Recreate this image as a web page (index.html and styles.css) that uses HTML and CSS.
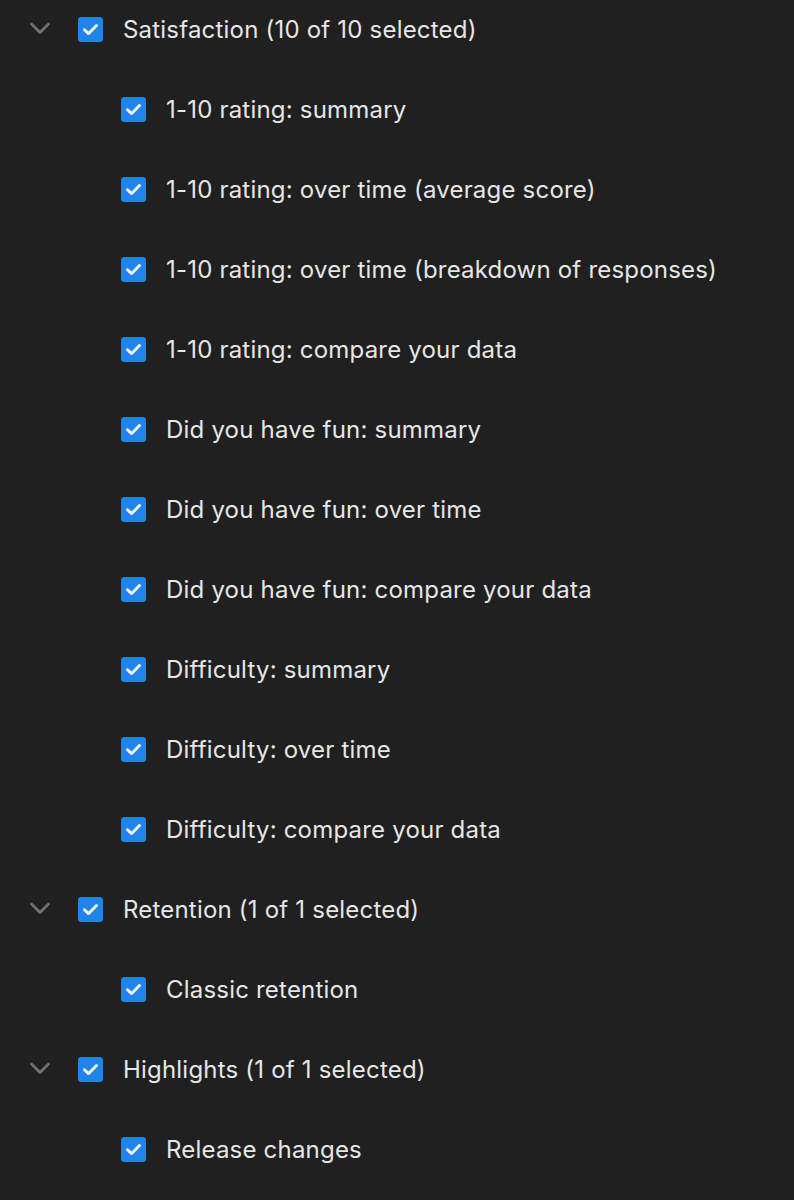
FILE: index.html
```html
<!DOCTYPE html>
<html>
<head>
<meta charset="utf-8">
<link rel="stylesheet" href="styles.css">
</head>
<body>
<div class="tree">
  <div class="row group">
    <svg class="chev" viewBox="0 0 20 20"><path d="M1.5 5 L10 13.5 L18.5 5" /></svg>
    <span class="cb"><svg viewBox="0 0 25 25"><path d="M6.5 12.8 L10.6 16.6 L18.5 8.6" /></svg></span>
    <span class="label">Satisfaction (10 of 10 selected)</span>
  </div>
  <div class="row item"><span class="cb"><svg viewBox="0 0 25 25"><path d="M6.5 12.8 L10.6 16.6 L18.5 8.6" /></svg></span><span class="label">1-10 rating: summary</span></div>
  <div class="row item"><span class="cb"><svg viewBox="0 0 25 25"><path d="M6.5 12.8 L10.6 16.6 L18.5 8.6" /></svg></span><span class="label">1-10 rating: over time (average score)</span></div>
  <div class="row item"><span class="cb"><svg viewBox="0 0 25 25"><path d="M6.5 12.8 L10.6 16.6 L18.5 8.6" /></svg></span><span class="label">1-10 rating: over time (breakdown of responses)</span></div>
  <div class="row item"><span class="cb"><svg viewBox="0 0 25 25"><path d="M6.5 12.8 L10.6 16.6 L18.5 8.6" /></svg></span><span class="label">1-10 rating: compare your data</span></div>
  <div class="row item"><span class="cb"><svg viewBox="0 0 25 25"><path d="M6.5 12.8 L10.6 16.6 L18.5 8.6" /></svg></span><span class="label">Did you have fun: summary</span></div>
  <div class="row item"><span class="cb"><svg viewBox="0 0 25 25"><path d="M6.5 12.8 L10.6 16.6 L18.5 8.6" /></svg></span><span class="label">Did you have fun: over time</span></div>
  <div class="row item"><span class="cb"><svg viewBox="0 0 25 25"><path d="M6.5 12.8 L10.6 16.6 L18.5 8.6" /></svg></span><span class="label">Did you have fun: compare your data</span></div>
  <div class="row item"><span class="cb"><svg viewBox="0 0 25 25"><path d="M6.5 12.8 L10.6 16.6 L18.5 8.6" /></svg></span><span class="label">Difficulty: summary</span></div>
  <div class="row item"><span class="cb"><svg viewBox="0 0 25 25"><path d="M6.5 12.8 L10.6 16.6 L18.5 8.6" /></svg></span><span class="label">Difficulty: over time</span></div>
  <div class="row item"><span class="cb"><svg viewBox="0 0 25 25"><path d="M6.5 12.8 L10.6 16.6 L18.5 8.6" /></svg></span><span class="label">Difficulty: compare your data</span></div>
  <div class="row group">
    <svg class="chev" viewBox="0 0 20 20"><path d="M1.5 5 L10 13.5 L18.5 5" /></svg>
    <span class="cb"><svg viewBox="0 0 25 25"><path d="M6.5 12.8 L10.6 16.6 L18.5 8.6" /></svg></span>
    <span class="label">Retention (1 of 1 selected)</span>
  </div>
  <div class="row item"><span class="cb"><svg viewBox="0 0 25 25"><path d="M6.5 12.8 L10.6 16.6 L18.5 8.6" /></svg></span><span class="label">Classic retention</span></div>
  <div class="row group">
    <svg class="chev" viewBox="0 0 20 20"><path d="M1.5 5 L10 13.5 L18.5 5" /></svg>
    <span class="cb"><svg viewBox="0 0 25 25"><path d="M6.5 12.8 L10.6 16.6 L18.5 8.6" /></svg></span>
    <span class="label">Highlights (1 of 1 selected)</span>
  </div>
  <div class="row item"><span class="cb"><svg viewBox="0 0 25 25"><path d="M6.5 12.8 L10.6 16.6 L18.5 8.6" /></svg></span><span class="label">Release changes</span></div>
</div>
</body>
</html>
```
FILE: styles.css
```css
html, body {
  margin: 0;
  padding: 0;
  background: #202020;
}
body {
  font-family: Inter, "Noto Sans", sans-serif;
  color: #e6e6e6;
  font-size: 24px;
  letter-spacing: 0.2px;
}
.tree {
  display: flex;
  flex-direction: column;
}
.row {
  height: 80px;
  box-sizing: border-box;
  display: flex;
  align-items: center;
  padding-bottom: 22px;
}
.group {
  padding-left: 30px;
}
.item {
  padding-left: 121px;
}
.chev {
  width: 20px;
  height: 20px;
  margin-right: 28px;
}
.chev path {
  fill: none;
  stroke: #727272;
  stroke-width: 2.6;
  stroke-linecap: round;
  stroke-linejoin: round;
}
.cb {
  width: 25px;
  height: 25px;
  border-radius: 3px;
  background: #1f84ec;
  display: flex;
  flex-shrink: 0;
}
.cb svg {
  width: 25px;
  height: 25px;
}
.cb path {
  fill: none;
  stroke: #ffffff;
  stroke-width: 2.8;
  stroke-linecap: round;
  stroke-linejoin: round;
}
.label {
  margin-left: 20px;
  white-space: nowrap;
}
```
